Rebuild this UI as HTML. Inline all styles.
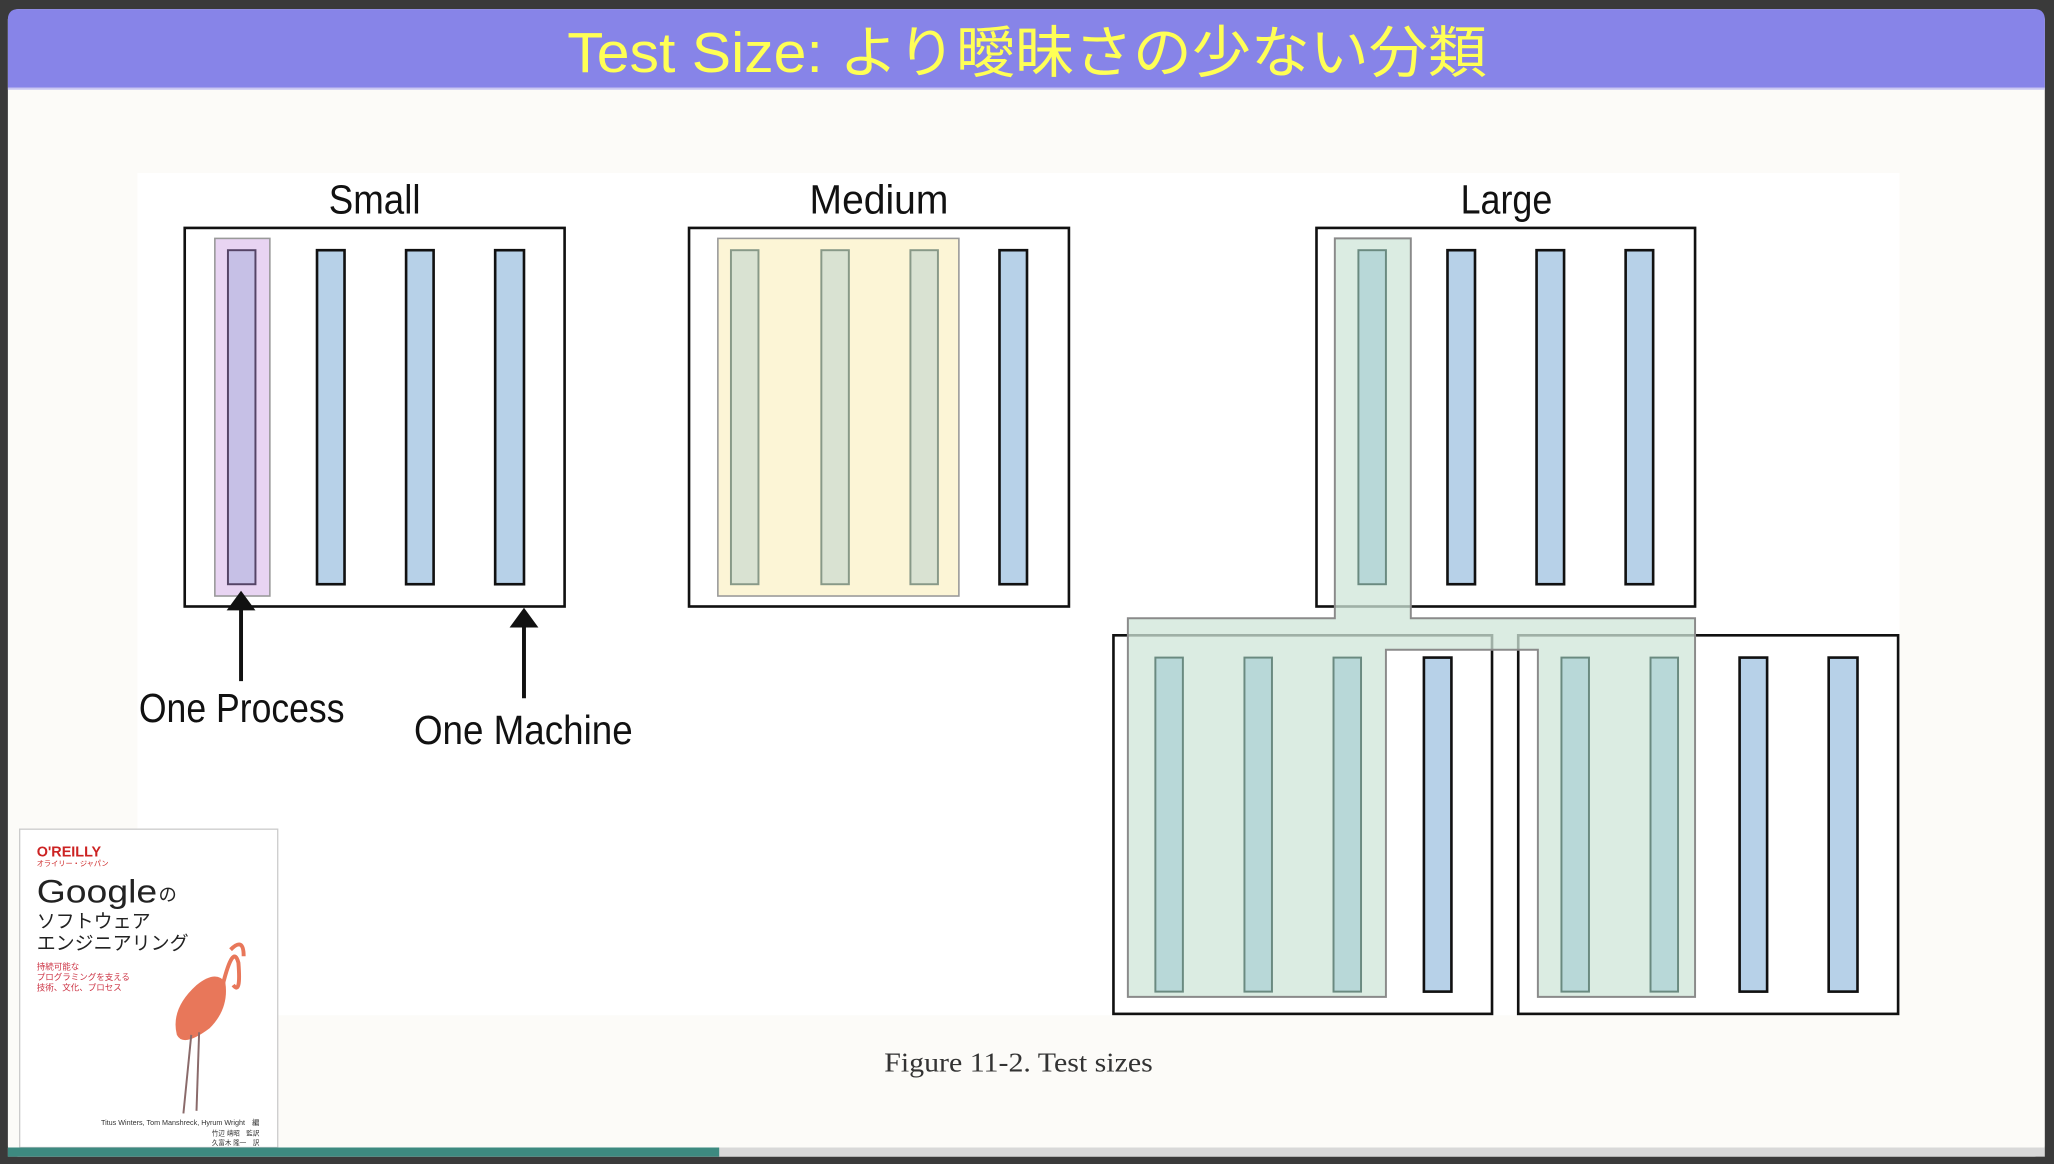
<!DOCTYPE html>
<html><head><meta charset="utf-8">
<style>
html,body{margin:0;padding:0;background:#3a3a3a;width:2054px;height:1164px;overflow:hidden}
svg{display:block}
</style></head><body>
<svg width="2054" height="1164" viewBox="0 0 1568 888.6" xmlns="http://www.w3.org/2000/svg">
<rect x="0" y="0" width="1568" height="889" fill="#3a3a3a"/>
<rect x="6" y="7" width="1555" height="876" rx="8" fill="#fcfbf8"/>
<path d="M14 7 H1553 Q1561 7 1561 15 V67 H6 V15 Q6 7 14 7Z" fill="#8784e8"/>
<rect x="6" y="67" width="1555" height="1.5" fill="#c9c6f2"/>
<text x="433" y="55" font-family="Liberation Sans, Noto Sans CJK JP, sans-serif" font-size="43" fill="#ffff55" textLength="702" lengthAdjust="spacingAndGlyphs">Test Size: より曖昧さの少ない分類</text>
<rect x="105" y="132" width="1345" height="643" fill="#ffffff"/>
<g font-family="Liberation Sans, sans-serif" font-size="31" fill="#111">
<text x="286" y="163" text-anchor="middle" textLength="70" lengthAdjust="spacingAndGlyphs">Small</text>
<text x="671" y="163" text-anchor="middle" textLength="106" lengthAdjust="spacingAndGlyphs">Medium</text>
<text x="1150" y="163" text-anchor="middle" textLength="70" lengthAdjust="spacingAndGlyphs">Large</text>
<text x="106" y="551" textLength="157" lengthAdjust="spacingAndGlyphs">One Process</text>
<text x="316" y="568" textLength="167" lengthAdjust="spacingAndGlyphs">One Machine</text>
</g>
<g fill="none" stroke="#111" stroke-width="2">
<rect x="141" y="174" width="290" height="289"/>
<rect x="526" y="174" width="290" height="289"/>
<rect x="1005" y="174" width="289" height="289"/>
<rect x="850" y="485" width="289" height="289"/>
<rect x="1159" y="485" width="290" height="289"/>
</g>
<rect x="164" y="182" width="42" height="273" fill="#e8d4f2" stroke="#999" stroke-width="1.2"/>
<rect x="174" y="191" width="21" height="255" fill="#c6c0e6" stroke="#554466" stroke-width="1.5"/>
<g fill="#b7d1e8" stroke="#111" stroke-width="2">
<rect x="242" y="191" width="21" height="255"/><rect x="310" y="191" width="21" height="255"/><rect x="378" y="191" width="22" height="255"/>
<rect x="763" y="191" width="21" height="255"/>
<rect x="1105" y="191" width="21" height="255"/><rect x="1173" y="191" width="21" height="255"/><rect x="1241" y="191" width="21" height="255"/>
<rect x="1087" y="502" width="21" height="255"/>
<rect x="1328" y="502" width="21" height="255"/><rect x="1396" y="502" width="22" height="255"/>
</g>
<rect x="548" y="182" width="184" height="273" fill="#fcf5d6" stroke="#999" stroke-width="1.2"/>
<g fill="#d9e2d2" stroke="#889988" stroke-width="1.5">
<rect x="558" y="191" width="21" height="255"/><rect x="627" y="191" width="21" height="255"/><rect x="695" y="191" width="21" height="255"/>
</g>
<path d="M1019 182 H1077 V472 H1294 V761 H1174 V496 H1058 V761 H861 V472 H1019 Z" fill="#cfe5d8" fill-opacity="0.75" stroke="#8a8a8a" stroke-width="1.5"/>
<g fill="#b8d8d8" stroke="#6a8a80" stroke-width="1.5">
<rect x="1037" y="191" width="21" height="255"/>
<rect x="882" y="502" width="21" height="255"/><rect x="950" y="502" width="21" height="255"/><rect x="1018" y="502" width="21" height="255"/>
<rect x="1192" y="502" width="21" height="255"/><rect x="1260" y="502" width="21" height="255"/>
</g>
<g fill="#111" stroke="#111">
<line x1="184" y1="465" x2="184" y2="520" stroke-width="3"/>
<path d="M173 466 L184 451 L195 466Z" stroke="none"/>
<line x1="400" y1="478" x2="400" y2="533" stroke-width="3"/>
<path d="M389 479 L400 464 L411 479Z" stroke="none"/>
</g>
<text x="675" y="818" font-family="Liberation Serif, serif" font-size="21" fill="#333" textLength="205" lengthAdjust="spacingAndGlyphs">Figure 11-2. Test sizes</text>
<rect x="15" y="633" width="197" height="243" fill="#fff" stroke="#ccc" stroke-width="1"/>
<g font-family="Liberation Sans, Noto Sans CJK JP, sans-serif">
<text x="28" y="654" font-size="11" font-weight="bold" fill="#cc2222">O'REILLY</text>
<text x="28" y="661" font-size="5.5" fill="#cc2222">オライリー・ジャパン</text>
<text x="28" y="689" font-size="25" fill="#222" textLength="92" lengthAdjust="spacingAndGlyphs">Google</text>
<text x="121" y="688" font-size="14" fill="#222">の</text>
<text x="28" y="708" font-size="14.5" fill="#222">ソフトウェア</text>
<text x="28" y="725" font-size="14.5" fill="#222">エンジニアリング</text>
<text x="28" y="740" font-size="6.5" fill="#cc3344">持続可能な</text>
<text x="28" y="748" font-size="6.5" fill="#cc3344">プログラミングを支える</text>
<text x="28" y="756" font-size="6.5" fill="#cc3344">技術、文化、プロセス</text>
<text x="198" y="859" text-anchor="end" font-size="5.5" fill="#333">Titus Winters, Tom Manshreck, Hyrum Wright　編</text>
<text x="198" y="867" text-anchor="end" font-size="5" fill="#333">竹辺 靖昭　監訳</text>
<text x="198" y="874" text-anchor="end" font-size="5" fill="#333">久富木 隆一　訳</text>
</g>
<g>
<path d="M150 752 Q165 740 172 750 Q175 770 160 785 Q140 800 135 790 Q130 770 150 752Z" fill="#e8775a"/>
<path d="M170 752 Q178 720 182 735 Q184 760 178 752" fill="none" stroke="#e8775a" stroke-width="3"/>
<path d="M176 725 Q186 715 186 730" fill="none" stroke="#e8775a" stroke-width="3"/>
<line x1="146" y1="790" x2="140" y2="850" stroke="#8a6a6a" stroke-width="1.5"/>
<line x1="152" y1="788" x2="150" y2="848" stroke="#8a6a6a" stroke-width="1.5"/>
</g>
<rect x="6" y="876" width="1555" height="7" fill="#d8d8d8"/>
<rect x="6" y="876" width="543" height="7" fill="#3d8a80"/>
</svg>
</body></html>
